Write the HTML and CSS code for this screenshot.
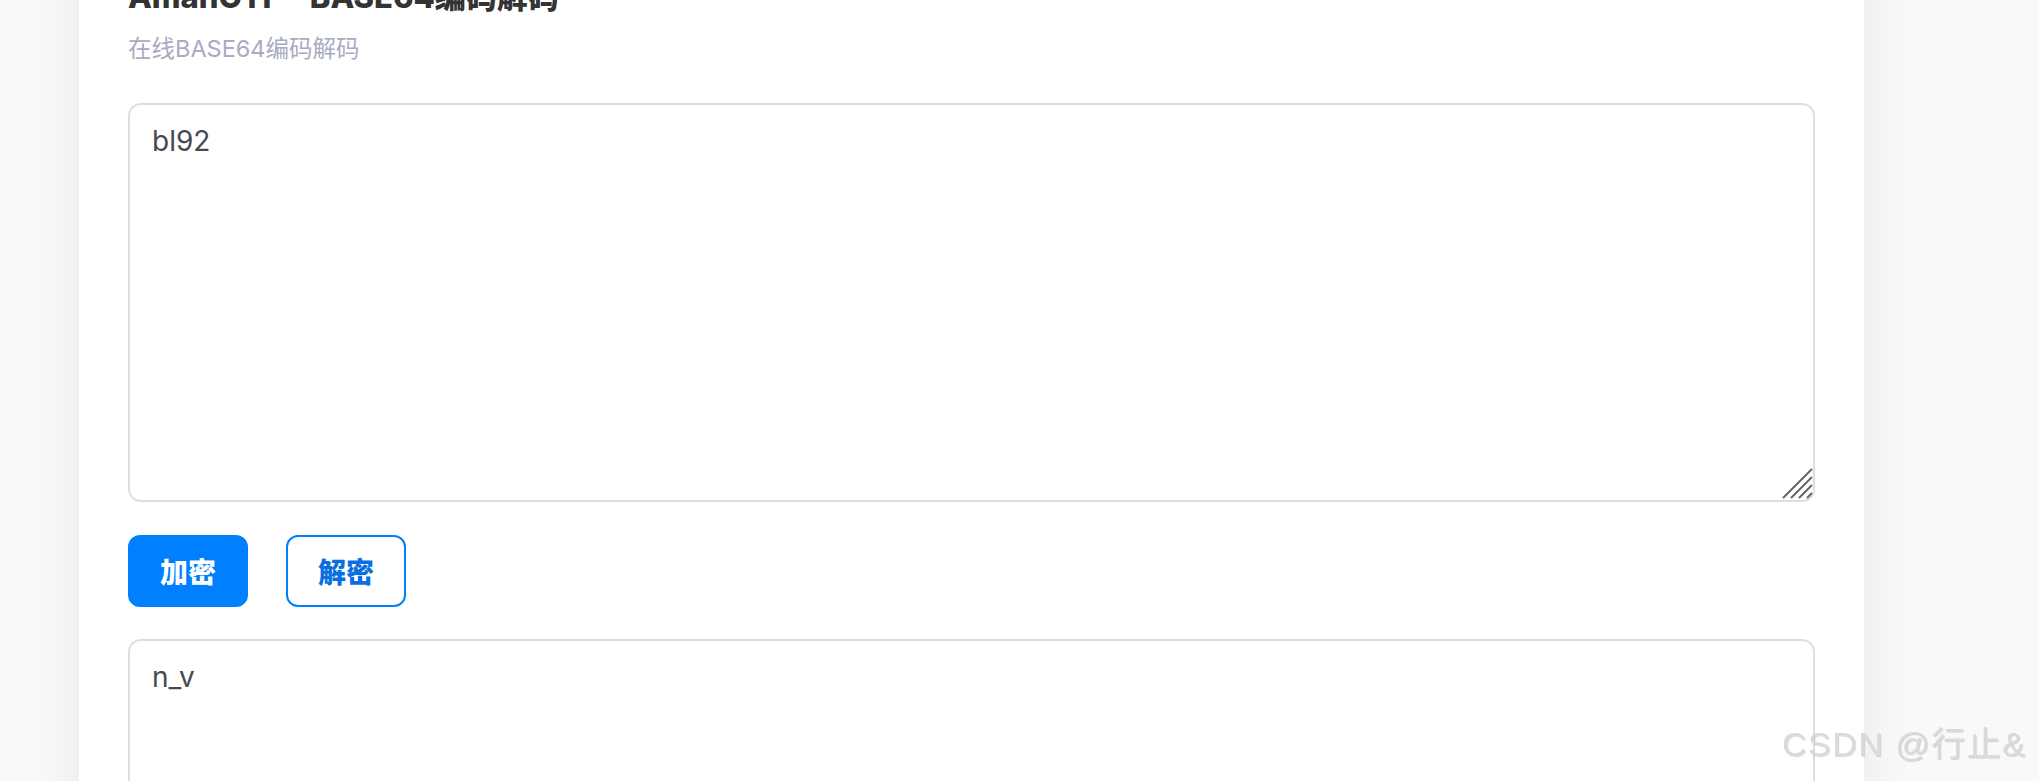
FILE: index.html
```html
<!DOCTYPE html>
<html lang="zh-CN">
<head>
<meta charset="utf-8">
<title>AmanCTF – BASE64编码解码</title>
<link rel="stylesheet" href="styles.css">
</head>
<body>
<main class="page">
  <section class="card">
    <h1 class="title">AmanCTF – BASE64编码解码</h1>
    <p class="subtitle">在线BASE64编码解码</p>
    <div class="field">
      <textarea class="box box-input">bl92</textarea>
      <svg class="grip" width="31" height="31" viewBox="0 0 31 31" aria-hidden="true">
        <path d="M1 30 L30 1 M9 30 L30 9 M17 30 L30 17 M25 30 L30 25" stroke="#666" stroke-width="2" fill="none"/>
      </svg>
    </div>
    <div class="actions">
      <button class="btn btn-primary">加密</button>
      <button class="btn btn-outline">解密</button>
    </div>
    <div class="field">
      <textarea class="box box-output">n_v</textarea>
    </div>
  </section>
</main>
<div class="watermark">CSDN @行止&amp;</div>
</body>
</html>
```

FILE: styles.css
```css
html, body {
  margin: 0;
  padding: 0;
  overflow: hidden;
  height: 100%;
}

body {
  background: #f8f9fa;
  font-family: Inter, "Noto Sans CJK SC", sans-serif;
  color: #333;
}

.page {
  padding-left: 79px;
  margin-top: -60px;
}

.card {
  width: 1785px;
  box-sizing: border-box;
  background: #fff;
  padding: 38px 49px 200px;
  box-shadow: 0 0 50px rgba(0, 0, 0, 0.07);
}

.title {
  margin: 0;
  font-size: 31px;
  line-height: 37px;
  font-weight: 800;
  color: #333;
}

.subtitle {
  margin: 17px 0 0;
  font-size: 23.5px;
  line-height: 33px;
  color: #a8abc2;
}

.field {
  position: relative;
  margin-top: 38px;
}

.box {
  display: block;
  width: 100%;
  box-sizing: border-box;
  height: 399px;
  border: 2px solid #dedede;
  border-radius: 13px;
  padding: 15px 22px 13px;
  font-family: Inter, "Noto Sans CJK SC", sans-serif;
  font-size: 28px;
  line-height: 1.5;
  color: #454a52;
  background: #fff;
  resize: none;
  outline: none;
}

.grip {
  position: absolute;
  right: 2px;
  bottom: 3px;
}

.actions {
  display: flex;
  gap: 38px;
  margin-top: 33px;
}

.actions + .field {
  margin-top: 32px;
}

.btn {
  height: 72px;
  padding: 0 30px;
  border-radius: 12px;
  font-family: "Noto Sans CJK SC", sans-serif;
  font-size: 28px;
  font-weight: 900;
  border: 2px solid #0080ff;
  cursor: pointer;
}

.btn-primary {
  background: #0080ff;
  color: #fff;
}

.btn-outline {
  background: #fff;
  color: #0a6fe0;
}

.watermark {
  position: fixed;
  left: 1782px;
  top: 724px;
  font-family: "Liberation Sans", "Noto Sans CJK SC", sans-serif;
  font-size: 34px;
  line-height: 40px;
  letter-spacing: 1.5px;
  white-space: nowrap;
  color: #dadada;
  text-shadow: 1px 1px 1px rgba(0, 0, 0, 0.16);
}
```
